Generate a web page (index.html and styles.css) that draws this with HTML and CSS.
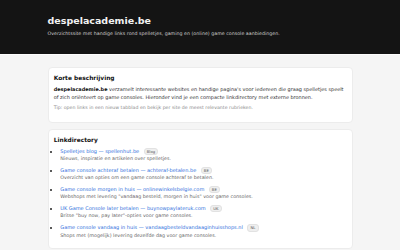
FILE: index.html
```html
<!DOCTYPE html>
<html lang="nl">
<head>
<meta charset="utf-8">
<title>despelacademie.be</title>
<link rel="stylesheet" href="styles.css">
</head>
<body>
<header class="site-header">
  <div class="wrap">
    <h1 class="site-title">despelacademie.be</h1>
    <p class="site-sub">Overzichtssite met handige links rond spelletjes, gaming en (online) game console aanbiedingen.</p>
  </div>
</header>
<main class="wrap main">
  <section class="card card-intro">
    <h2 class="card-title">Korte beschrijving</h2>
    <p class="intro"><strong>despelacademie.be</strong> verzamelt interessante websites en handige pagina's voor iedereen die graag spelletjes speelt of zich oriënteert op game consoles. Hieronder vind je een compacte linkdirectory met externe bronnen.</p>
    <p class="tip">Tip: open links in een nieuw tabblad en bekijk per site de meest relevante rubrieken.</p>
  </section>
  <section class="card card-links">
    <h2 class="card-title">Linkdirectory</h2>
    <ul class="links">
      <li><a href="#">Spelletjes blog — spellenhut.be</a><span class="badge">Blog</span><div class="desc">Nieuws, inspiratie en artikelen over spelletjes.</div></li>
      <li><a href="#">Game console achteraf betalen — achteraf-betalen.be</a><span class="badge">BE</span><div class="desc">Overzicht van opties om een game console achteraf te betalen.</div></li>
      <li><a href="#">Game console morgen in huis — onlinewinkelsbelgie.com</a><span class="badge">BE</span><div class="desc">Webshops met levering "vandaag besteld, morgen in huis" voor game consoles.</div></li>
      <li><a href="#">UK Game Console later betalen — buynowpaylateruk.com</a><span class="badge">UK</span><div class="desc">Britse "buy now, pay later"-opties voor game consoles.</div></li>
      <li><a href="#">Game console vandaag in huis — vandaagbesteldvandaaginhuisshops.nl</a><span class="badge">NL</span><div class="desc">Shops met (mogelijk) levering dezelfde dag voor game consoles.</div></li>
    </ul>
  </section>
</main>
</body>
</html>
```

FILE: styles.css
```css
html, body {
  margin: 0;
  padding: 0;
}
body {
  background: #f5f5f5;
  font-family: "DejaVu Sans", Verdana, sans-serif;
  color: #333;
  font-size: 5px;
}
.wrap {
  max-width: 305px;
  margin: 0 auto;
}
.site-header {
  background: #141414;
  border-bottom: 1.5px solid #fdfdfd;
  padding: 14.5px 0 16.5px;
}
.site-title {
  margin: 0;
  font-size: 9.5px;
  line-height: 11.4px;
  font-weight: bold;
  color: #f2f2f2;
}
.site-sub {
  margin: 4.5px 0 0;
  font-size: 4.75px;
  line-height: 7px;
  color: #cfcfcf;
}
.main {
  padding-top: 12px;
  display: flex;
  flex-direction: column;
  gap: 6px;
}
.card {
  background: #fff;
  border: 0.5px solid #ececec;
  border-radius: 4px;
  padding: 6.8px 5.2px 8.5px;
}
.card-title {
  margin: 0;
  font-size: 5.9px;
  line-height: 7px;
  font-weight: bold;
  color: #111;
}
.intro {
  margin: 3px 0 0;
  font-size: 4.95px;
  line-height: 8.3px;
  color: #333;
}
.intro strong {
  color: #111;
}
.tip {
  margin: 2.8px 0 0;
  font-size: 4.7px;
  line-height: 7px;
  color: #8a8a8a;
}
.card-intro {
  padding-bottom: 11px;
}
.links {
  margin: 3px 0 0;
  padding: 0 0 0 6.6px;
  list-style: disc;
}
.links li {
  margin-top: 2.4px;
  font-size: 5px;
  line-height: 8.3px;
}
.links li:first-child {
  margin-top: 0;
}
.links li::marker {
  color: #222;
}
.links a {
  color: #2f6fdc;
  text-decoration: none;
}
.badge {
  display: inline-block;
  margin-left: 4.4px;
  padding: 0 2.2px;
  font-size: 3.8px;
  line-height: 5.6px;
  border-radius: 3px;
  background: #efefef;
  border: 0.5px solid #e2e2e2;
  color: #555;
  vertical-align: 0.3px;
}
.desc {
  font-size: 4.8px;
  line-height: 8.4px;
  color: #666;
}
```
